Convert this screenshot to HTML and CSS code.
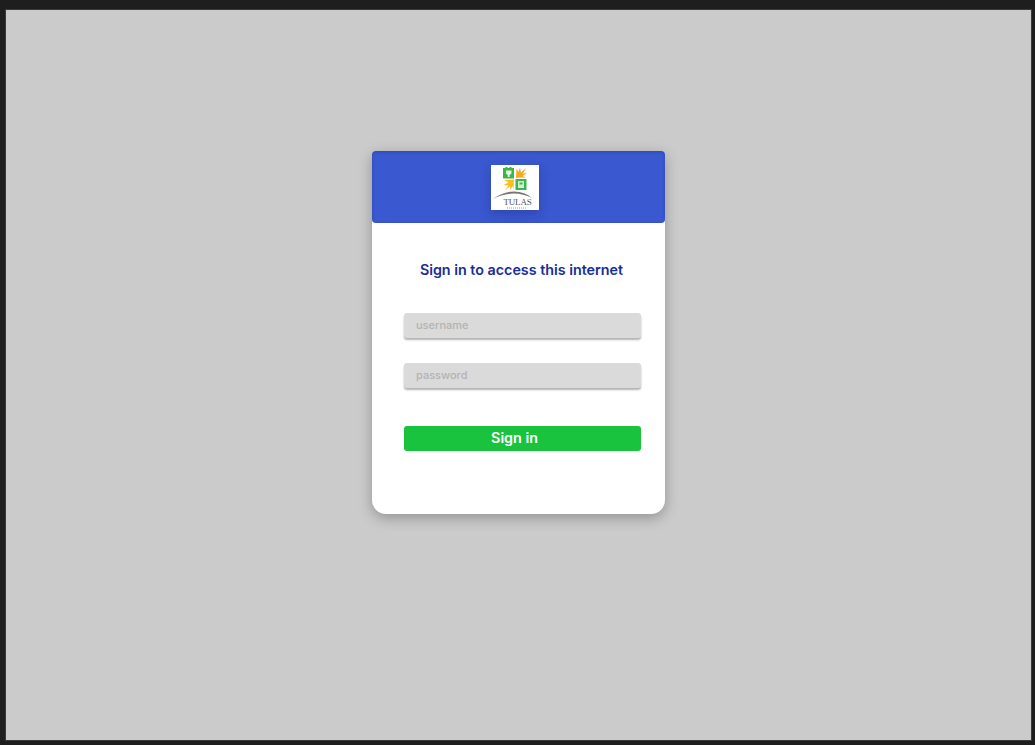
FILE: index.html
```html
<!DOCTYPE html>
<html lang="en">

<head>
    <meta charset="UTF-8">
    <meta name="viewport" content="width=device-width, initial-scale=1.0">
    <title>Sign in</title>
    <link rel="stylesheet" href="styles.css">
</head>

<body>
    <main class="canvas">
        <section class="card">
            <header class="card-head">
                <svg class="logo" viewBox="0 0 48 45" width="48" height="45">
                    <rect width="48" height="45" fill="#fff" />
                    <!-- green squares -->
                    <path d="M12 3h2.500v-1h2v1h2v-1h2v1h2.500v10.500H12z" fill="#3cb54a" />
                    <rect x="24.500" y="14" width="11" height="11" fill="#3cb54a" />
                    <path d="M15 5.500h5.500v3l-1.800 1.500v2h-2v-2l-1.700-1.500z" fill="#e6f4e6" />
                    <rect x="27" y="16" width="6" height="7" fill="#d5edd6" />
                    <rect x="28.500" y="17.500" width="3" height="2" fill="#3cb54a" />
                    <!-- orange bursts -->
                    <path d="M25 13L25.500 3.500 27.500 7 29 2.500 30 7.500 35 3 32 8.500 36 8 31.500 11 35.500 12.500 30 12.500z" fill="#f8a91e" />
                    <path d="M23 14.500L13 15 17.500 17.500 12.500 20 17.500 20.500 14 25 19 21.500 19.500 25 21.500 21 22.500 24z" fill="#fbbd22" />
                    <!-- arc and name -->
                    <path d="M2 34Q12 26.500 23 26.500Q34 26.500 41 33Q32 28.500 23 28.500Q12 28.500 2 34z" fill="#77777a" />
                    <text class="logo-name" x="12.500" y="40">TULAS</text>
                    <!-- the line under the name can't be read in the screenshot -->
                    <path d="M16 43h20" stroke="#9a9a9a" stroke-width="1" stroke-dasharray="1 1" />
                </svg>
            </header>
            <form class="card-body">
                <h1 class="title">Sign in to access this internet</h1>
                <div class="field">username</div>
                <div class="field">password</div>
                <button class="submit" type="button">Sign in</button>
            </form>
        </section>
    </main>
</body>

</html>
```

FILE: styles.css
```css
html,
body {
    height: 100%;
}

body {
    margin: 0;
    padding: 10px 4px 5px 6px;
    box-sizing: border-box;
    background-color: #1e1e1e;
    font-family: "Inter", "Liberation Sans", sans-serif;
}

.canvas {
    height: 100%;
    background-color: #cbcbcb;
    padding-top: 141px;
    padding-left: 366px;
    box-sizing: border-box;
    box-shadow: 0 0 0 1px #3a3a3a;
}

.card {
    width: 293px;
    height: 363px;
    background-color: #fff;
    border-radius: 4px 4px 14px 14px;
    box-shadow: 0 4px 14px rgba(0, 0, 0, 0.28);
}

.card-head {
    height: 72px;
    background-color: #3a58d0;
    border-radius: 4px;
    padding-top: 14px;
    padding-left: 118.500px;
    box-sizing: border-box;
    box-shadow: inset 0 1px 3px rgba(20, 40, 130, 0.35);
}

.logo {
    display: block;
    box-shadow: 0 4px 10px rgba(20, 30, 90, 0.3);
}

.logo-name {
    font-family: "Liberation Serif", serif;
    font-size: 9px;
    letter-spacing: -0.2px;
    fill: #555;
}

.card-body {
    display: flex;
    flex-direction: column;
    padding: 37px 24px 0 32px;
}

.title {
    margin: 0 0 33px;
    padding-right: 2px;
    font-size: 14.300px;
    line-height: 20px;
    font-weight: 600;
    color: #182e95;
    text-align: center;
}

.field {
    height: 25px;
    margin-bottom: 25px;
    padding-left: 12px;
    background-color: #dadada;
    border-radius: 3px;
    box-shadow: 0 2px 2px rgba(0, 0, 0, 0.3);
    color: #b3b3b3;
    font-size: 11px;
    font-weight: 500;
    line-height: 24px;
}

.submit {
    height: 25px;
    margin-top: 13px;
    padding: 0 16px 2px 0;
    border: 0;
    border-radius: 3px;
    background-color: #19c33d;
    color: #fff;
    font-family: inherit;
    font-size: 14.300px;
    font-weight: 600;
    cursor: pointer;
}
```
